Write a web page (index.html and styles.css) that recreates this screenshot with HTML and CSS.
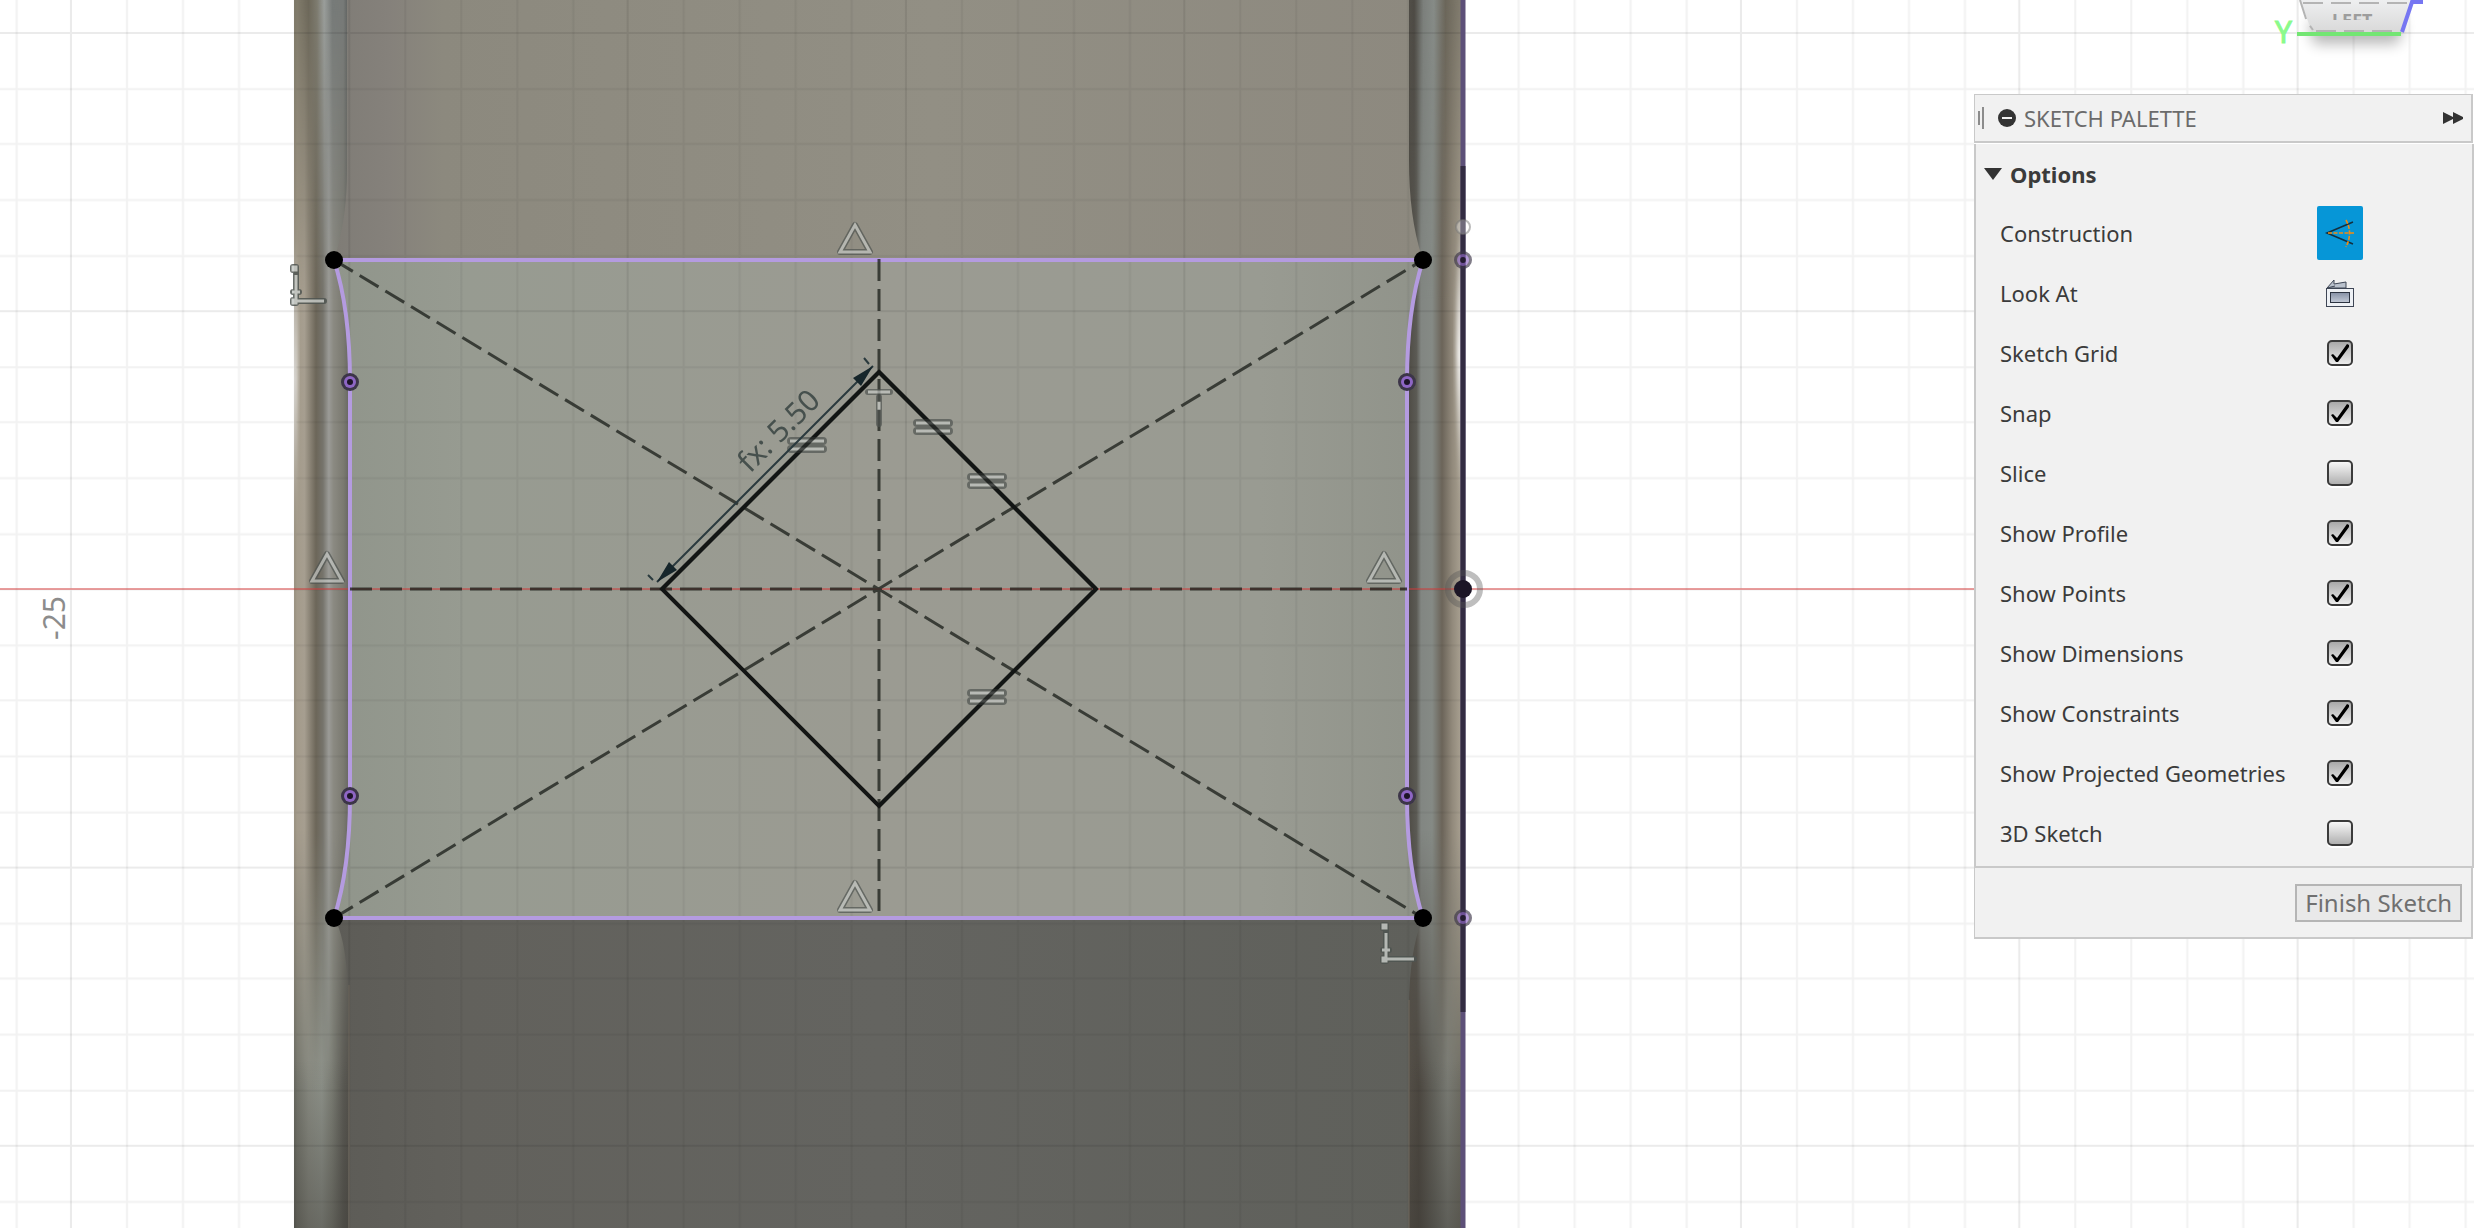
FILE: index.html
```
<!DOCTYPE html>
<html lang="en">
<head>
<meta charset="utf-8">
<meta name="viewport" content="width=device-width, initial-scale=1">
<title>Sketch</title>
<link rel="stylesheet" href="styles.css">
</head>
<body class="workspace">
<svg class="canvas" viewBox="0 0 2474 1228" preserveAspectRatio="xMinYMin slice" role="img" aria-label="Sketch canvas">
  <defs>
    <pattern id="grid" x="71" y="33" width="278.33" height="278.2" patternUnits="userSpaceOnUse">
      <path class="grid-minor" d="M56 0V279M112 0V279M168 0V279M224 0V279M0 56H279M0 111H279M0 167H279M0 223H279"/>
      <path class="grid-major" d="M0 0V279M278.33 0V279M0 0H279M0 278.2H279"/>
    </pattern>
    <linearGradient id="faceTop"><stop offset="0" stop-color="#7f7c76"/><stop offset=".05" stop-color="#85817b"/><stop offset=".1" stop-color="#8c897e"/><stop offset=".55" stop-color="#928f84"/><stop offset="1" stop-color="#8d897f"/></linearGradient>
    <linearGradient id="faceMid"><stop offset="0" stop-color="#90958b"/><stop offset=".12" stop-color="#979b91"/><stop offset=".5" stop-color="#9b9b92"/><stop offset=".85" stop-color="#999b92"/><stop offset="1" stop-color="#90938a"/></linearGradient>
    <linearGradient id="faceLow"><stop offset="0" stop-color="#5d5c57"/><stop offset=".12" stop-color="#62615c"/><stop offset=".5" stop-color="#646460"/><stop offset="1" stop-color="#5f605b"/></linearGradient>
    <linearGradient id="leftMid"><stop offset="0" stop-color="#a39a89"/><stop offset=".18" stop-color="#a69e90"/><stop offset=".38" stop-color="#6c6659"/><stop offset=".5" stop-color="#76746c"/><stop offset=".6" stop-color="#9b9b97"/><stop offset=".68" stop-color="#8b8a82"/><stop offset=".85" stop-color="#7b7a71"/><stop offset="1" stop-color="#5d5e5a"/></linearGradient>
    <linearGradient id="leftTop"><stop offset="0" stop-color="#85806f"/><stop offset=".25" stop-color="#6c6759"/><stop offset=".4" stop-color="#7e7c70"/><stop offset=".52" stop-color="#9a9e9b"/><stop offset=".66" stop-color="#767a78"/><stop offset=".85" stop-color="#777a78"/><stop offset="1" stop-color="#484b4a"/></linearGradient>
    <linearGradient id="leftLow"><stop offset="0" stop-color="#6e6f66"/><stop offset=".25" stop-color="#898b82"/><stop offset=".48" stop-color="#8f938b"/><stop offset=".65" stop-color="#7c7e75"/><stop offset=".85" stop-color="#5b5a54"/><stop offset="1" stop-color="#4f4c47"/></linearGradient>
    <linearGradient id="rightMid"><stop offset="0" stop-color="#4b4841"/><stop offset=".18" stop-color="#5b5a54"/><stop offset=".26" stop-color="#828682"/><stop offset=".45" stop-color="#858a85"/><stop offset=".62" stop-color="#6b6459"/><stop offset=".8" stop-color="#928a7c"/><stop offset="1" stop-color="#b0a898"/></linearGradient>
    <linearGradient id="rightTop"><stop offset="0" stop-color="#55524b"/><stop offset=".14" stop-color="#4d4a44"/><stop offset=".3" stop-color="#7b7f7b"/><stop offset=".48" stop-color="#868b87"/><stop offset=".68" stop-color="#6b665a"/><stop offset="1" stop-color="#858072"/></linearGradient>
    <linearGradient id="rightLow"><stop offset="0" stop-color="#57524a"/><stop offset=".22" stop-color="#4c4740"/><stop offset=".5" stop-color="#65655e"/><stop offset=".72" stop-color="#7b7d76"/><stop offset="1" stop-color="#6c6a5f"/></linearGradient>
    <linearGradient id="fadeDown" x2="0" y2="1"><stop offset="0" stop-color="#fff"/><stop offset="1" stop-color="#000"/></linearGradient>
    <linearGradient id="fadeUp" x2="0" y2="1"><stop offset="0" stop-color="#000"/><stop offset=".65" stop-color="#fff"/></linearGradient>
    <linearGradient id="shadeLow" x2="0" y2="1"><stop offset="0" stop-color="#3c3a35" stop-opacity="0"/><stop offset="1" stop-color="#3c3a35" stop-opacity=".45"/></linearGradient>
    <linearGradient id="glint" x2="0" y2="1"><stop offset="0" stop-color="#fff" stop-opacity="0"/><stop offset=".5" stop-color="#fff" stop-opacity=".9"/><stop offset="1" stop-color="#fff" stop-opacity="0"/></linearGradient>
    <linearGradient id="cube" x2="0" y2="1"><stop offset="0" stop-color="#eeeff0"/><stop offset="1" stop-color="#d9d9d9"/></linearGradient>
    <mask id="topMask"><rect width="2474" height="300" fill="url(#fadeDown)"/></mask>
    <mask id="lowMask"><rect y="830" width="2474" height="398" fill="url(#fadeUp)"/></mask>
    <clipPath id="cubeTextClip"><rect x="2325" y="12" width="64" height="8"/></clipPath>
    <filter id="soft" x="-50%" y="-20%" width="200%" height="140%"><feGaussianBlur stdDeviation="2"/></filter>
    <filter id="shadow" x="-50%" y="-100%" width="200%" height="300%"><feGaussianBlur stdDeviation="7"/></filter>
    <g id="midpoint"><path class="mark-edge" d="M0-27L15 0H-15Z"/><path class="mark-fill" d="M0-27L15 0H-15Z"/></g>
    <g id="equal"><path class="mark-edge wide" d="M-16-4H16M-16 4H16"/><path class="mark-fill" d="M-17-4H17M-17 4H17"/></g>
    <g id="corner"><path class="mark-edge" d="M2 2V33H30M-1-1h3v3h-3zM-1 32h3v3h-3zM-1 24h6"/><path class="mark-fill" d="M2 7V33H30M-1-1h3v3h-3zM-1 32h3v3h-3zM-2 24h8"/></g>
    <g id="vertex"><circle r="9" class="vertex-edge"/><circle r="6" class="vertex-ring"/><circle r="3" class="vertex-core"/></g>
  </defs>

  <!-- Solid body -->
  <g>
    <rect x="294" width="58" height="1228" fill="url(#leftMid)"/>
    <rect x="294" width="58" height="300" fill="url(#leftTop)" mask="url(#topMask)"/>
    <rect x="294" y="830" width="58" height="398" fill="url(#leftLow)" mask="url(#lowMask)"/>
    <rect x="1406" width="58" height="1228" fill="url(#rightMid)"/>
    <rect x="1406" width="58" height="300" fill="url(#rightTop)" mask="url(#topMask)"/>
    <rect x="1406" y="830" width="58" height="398" fill="url(#rightLow)" mask="url(#lowMask)"/>
    <rect x="294" y="1060" width="58" height="168" fill="url(#shadeLow)"/>
    <rect x="1406" y="1060" width="58" height="168" fill="url(#shadeLow)"/>
    <path d="M292 200Q302 350 292 560Z" fill="url(#glint)" filter="url(#soft)"/>
    <path d="M1463 190Q1450 340 1463 520Z" fill="url(#glint)" filter="url(#soft)"/>
    <path d="M347 0V170Q347 220 334 260H1423Q1409 220 1409 160V0Z" fill="url(#faceTop)"/>
    <path d="M334 918Q345 935 348 985V1228H1409V1010Q1409 950 1423 918Z" fill="url(#faceLow)"/>
    <path d="M334 260Q350 310 350 382V796Q350 868 334 918H1423Q1407 868 1407 796V382Q1407 310 1423 260Z" fill="url(#faceMid)"/>
    <path class="seam" d="M349 985V1228M1409 1000V1228"/>
  </g>
  <rect width="2474" height="1228" fill="url(#grid)"/>
  <path class="axis" d="M0 589H2474"/>
  <text class="ruler" transform="translate(65 640) rotate(-90)">-25</text>

  <!-- Projected edges -->
  <path class="edge-far" d="M1463 0V1228"/>
  <path class="edge-near" d="M1463 166V1012"/>
  <path class="profile" d="M334 260H1423Q1407 310 1407 382V796Q1407 868 1423 918H334Q350 868 350 796V382Q350 310 334 260Z"/>

  <!-- Construction lines and profile square -->
  <path class="construction" d="M334 260L1423 918M334 918L1423 260M879 259V918M350 589H1407"/>
  <path class="square" d="M879 372L1096 589L879 806L662 589Z"/>

  <!-- Constraint marks -->
  <g class="marks">
    <use href="#midpoint" x="855" y="252"/><use href="#midpoint" x="327" y="581"/>
    <use href="#midpoint" x="1384" y="581"/><use href="#midpoint" x="855" y="910"/>
    <use href="#equal" x="933" y="427"/><use href="#equal" x="987" y="481"/>
    <use href="#equal" x="807" y="445"/><use href="#equal" x="987" y="697"/>
    <path class="mark-edge" d="M868 392H890M879 397V424"/><path class="mark-fill" d="M868 392H890M879 402V410"/>
  </g>
  <path class="square" d="M879 372L1096 589M662 589L879 372M1096 589L879 806" opacity=".6"/>
  <g class="corners"><use href="#corner" x="294" y="268"/><use href="#corner" x="1384" y="926"/></g>

  <!-- Dimension -->
  <g class="dimension">
    <path class="dimension-line" d="M657 582L873 366M864 358l5 6M648 575l5 5"/>
    <path d="M873 366L853 378L861 386ZM657 582L669 562L677 570Z"/>
    <text transform="translate(750 474) rotate(-45)">fx: 5.50</text>
  </g>

  <!-- Sketch points -->
  <circle class="point" cx="334" cy="260" r="9"/><circle class="point" cx="1423" cy="260" r="9"/>
  <circle class="point" cx="334" cy="918" r="9"/><circle class="point" cx="1423" cy="918" r="9"/>
  <use href="#vertex" x="350" y="382"/><use href="#vertex" x="350" y="796"/>
  <use href="#vertex" x="1407" y="382"/><use href="#vertex" x="1407" y="796"/>
  <g opacity=".65"><use href="#vertex" x="1463" y="260"/><use href="#vertex" x="1463" y="918"/></g>
  <circle class="ghost" cx="1463" cy="227" r="7"/>
  <circle class="origin-ring" cx="1464" cy="589" r="16"/>
  <circle class="origin" cx="1463" cy="589" r="9"/>

  <!-- View cube -->
  <path d="M2308 22H2404L2398 44H2314Z" fill="#000" opacity=".28" filter="url(#shadow)"/>
  <path d="M2300 0H2412L2400 32H2312Z" fill="url(#cube)"/>
  <path class="cube-dash" d="M2303 3H2408M2300 0L2307 22L2313 30M2316 31H2398"/>
  <text class="cube-text" x="2332" y="27" clip-path="url(#cubeTextClip)">LEFT</text>
  <path class="cube-y" d="M2297 34H2401"/>
  <path class="cube-z" d="M2402 32L2412 2H2423"/>
  <text class="cube-axis" x="2275" y="43">Y</text>
</svg>

<aside class="palette">
  <header class="palette-header">
    <span class="grip"></span>
    <button class="icon-button" type="button" aria-label="Collapse palette">
      <svg width="18" height="18" viewBox="0 0 18 18"><circle cx="9" cy="9" r="9" fill="#333"/><path d="M4 9H14" stroke="#f1f1f1" stroke-width="2"/></svg>
    </button>
    <h1 class="palette-title">SKETCH PALETTE</h1>
    <button class="icon-button" type="button" aria-label="Dock palette">
      <svg width="20" height="12" viewBox="0 0 20 12"><path d="M0 0L10 5V0L20 5V7L10 12V7L0 12Z" fill="#333"/></svg>
    </button>
  </header>
  <section class="options">
    <h2 class="options-title">
      <svg width="18" height="12" viewBox="0 0 18 12"><path d="M0 0H18L9 12Z" fill="#333"/></svg>Options
    </h2>
    <div class="row"><label for="construction">Construction</label>
      <button class="tool active" id="construction" type="button" aria-pressed="true">
        <svg width="32" height="32" viewBox="0 0 32 32" fill="none"><path d="M29 5L3 16L29 27" stroke="#14303f" stroke-width="1.6"/><path d="M4 16H31" stroke="#f28c13" stroke-width="1.6" stroke-dasharray="4 1.5"/><path d="M22 3Q29 16 22 30" stroke="#f28c13" stroke-width="1.6" stroke-dasharray="4 1.5"/></svg>
      </button></div>
    <div class="row"><label for="look-at">Look At</label>
      <button class="tool" id="look-at" type="button">
        <svg width="32" height="32" viewBox="0 0 32 32"><defs><linearGradient id="screen" x2="0" y2="1"><stop offset="0" stop-color="#8590a5"/><stop offset="1" stop-color="#c3cad7"/></linearGradient></defs><path d="M3 11L10 3V7L22 5V11Z" fill="#b9c1cc" stroke="#3e4655"/><path d="M3 11L11 9" stroke="#3e4655"/><rect x="2.500" y="11.500" width="27" height="18" fill="#eef1f5" stroke="#3e4655"/><rect x="6.500" y="15.500" width="19" height="10" fill="url(#screen)" stroke="#2c3341"/></svg>
      </button></div>
    <div class="row"><label for="grid-on">Sketch Grid</label><input class="check" id="grid-on" type="checkbox" checked></div>
    <div class="row"><label for="snap">Snap</label><input class="check" id="snap" type="checkbox" checked></div>
    <div class="row"><label for="slice">Slice</label><input class="check" id="slice" type="checkbox"></div>
    <div class="row"><label for="profile">Show Profile</label><input class="check" id="profile" type="checkbox" checked></div>
    <div class="row"><label for="points">Show Points</label><input class="check" id="points" type="checkbox" checked></div>
    <div class="row"><label for="dimensions">Show Dimensions</label><input class="check" id="dimensions" type="checkbox" checked></div>
    <div class="row"><label for="constraints">Show Constraints</label><input class="check" id="constraints" type="checkbox" checked></div>
    <div class="row"><label for="projected">Show Projected Geometries</label><input class="check" id="projected" type="checkbox" checked></div>
    <div class="row"><label for="sketch-3d">3D Sketch</label><input class="check" id="sketch-3d" type="checkbox"></div>
  </section>
  <footer class="palette-footer"><button class="finish" type="button">Finish Sketch</button></footer>
</aside>
</body>
</html>
```
FILE: styles.css
```
* { box-sizing: border-box; }

.workspace {
  margin: 0;
  min-height: 100vh;
  display: flex;
  justify-content: flex-end;
  align-items: flex-start;
  padding: 94px 0 0;
  overflow: hidden;
  background: #fff;
  color: #3b3b3b;
  font: 22px/28px "Noto Sans", "Open Sans", sans-serif;
}

/* Drawing canvas, behind the palette */
.canvas { position: absolute; inset: 0; width: 100%; height: 100%; z-index: 0; }
.grid-minor { stroke: #000; stroke-opacity: .05; stroke-width: 2; fill: none; }
.grid-major { stroke: #000; stroke-opacity: .08; stroke-width: 2; fill: none; }
.axis { stroke: #dc3c3c; stroke-opacity: .48; stroke-width: 2; }
.ruler { font-size: 30px; fill: #8c8c8c; }
.seam { stroke: #746c60; stroke-width: 1; fill: none; }
.edge-far { stroke: #5d5078; stroke-width: 5; }
.edge-near { stroke: #332c42; stroke-width: 5; }
.profile { stroke: #b49be0; stroke-width: 4; fill: none; }
.construction { stroke: #20241f; stroke-opacity: .8; stroke-width: 3; stroke-dasharray: 22 8; fill: none; }
.square { stroke: #131514; stroke-width: 4; fill: none; }
.marks { opacity: .7; }
.corners { opacity: .85; }
.mark-edge { stroke: #4f5451; stroke-width: 6; stroke-linejoin: round; stroke-linecap: round; fill: none; }
.mark-edge.wide { stroke-width: 8; }
.mark-fill { stroke: #c5c8c4; stroke-width: 3; fill: none; }
.dimension { fill: #16262b; font-size: 30px; }
.dimension text { fill: #46504d; }
.dimension-line { stroke: #2a3a3e; stroke-width: 2; fill: none; }
.point { fill: #000; }
.vertex-edge { fill: #3c3548; }
.vertex-ring { fill: #8e66c4; }
.vertex-core { fill: #1d1428; }
.ghost { fill: #fff; fill-opacity: .3; stroke: #777; stroke-opacity: .5; stroke-width: 2; }
.origin-ring { fill: none; stroke: #555; stroke-opacity: .38; stroke-width: 6; }
.origin { fill: #1c1626; }
.cube-dash { fill: none; stroke: #b4b4b4; stroke-width: 2; stroke-dasharray: 20 8; }
.cube-text { font-size: 18px; font-weight: 700; fill: #9d9d9d; }
.cube-y { stroke: #73e673; stroke-width: 4; }
.cube-z { stroke: #7676f2; stroke-width: 4; fill: none; }
.cube-axis { font-size: 30px; fill: #8bfa8b; stroke: #8bfa8b; stroke-width: 1; }

/* Palette */
.palette { position: relative; z-index: 1; width: 500px; background: #fff; }
.palette-header {
  display: flex;
  align-items: center;
  height: 49px;
  margin-right: 1px;
  padding: 0 8px 0 3px;
  border: 1px solid #c9c9c9;
  border-width: 1px 2px 2px 1px;
  background: #f1f1f1;
}
.grip { width: 6px; height: 22px; margin-right: 14px; border-right: 2px solid #8c8c8c; background: linear-gradient(#8c8c8c, #8c8c8c) 0 50% / 2px 14px no-repeat; }
.palette-title { flex: 1; margin: 0 0 0 8px; font-size: 22px; font-weight: 400; color: #6b6b6b; }
.icon-button { display: flex; padding: 0; border: 0; background: none; }
.options { margin-top: 1px; padding: 0 8px 3px; border: solid #c9c9c9; border-width: 0 2px 2px; background: #f1f1f1; }
.options-title { display: flex; align-items: center; gap: 8px; height: 59px; margin: 0; font-size: 22px; font-weight: 700; }
.row { display: flex; align-items: center; height: 60px; padding-left: 16px; }
.row label { width: 317px; }
.row .check { margin-left: 10px; }
.tool { display: flex; align-items: center; justify-content: center; width: 46px; height: 54px; padding: 0; border: 0; border-radius: 2px; background: none; }
.tool.active { background: #0696d7; }
.check {
  appearance: none;
  display: grid;
  place-items: center;
  width: 26px;
  height: 26px;
  margin: 0;
  border: 2px solid #3b3b3b;
  border-radius: 5px;
  background: linear-gradient(#f8f8f8, #b0b0b0);
  box-shadow: 0 2px 0 #fff;
}
.check:checked { background: linear-gradient(#a9a9a9, #ececec); }
.check:checked::before {
  content: "";
  width: 18px;
  height: 18px;
  background: #000;
  clip-path: polygon(0 11px, 2px 10px, 6px 14px, 16px 0, 18px 1px, 18px 3px, 7px 18px, 5px 18px);
}
.palette-footer {
  display: flex;
  justify-content: flex-end;
  margin-right: 1px;
  padding: 16px 9px 15px 0;
  border: solid #c9c9c9;
  border-width: 0 2px 2px 1px;
  background: #f1f1f1;
}
.finish { height: 38px; padding: 0 8px; border: 2px solid #b5b5b5; background: #e9e9e9; color: #707070; font: 24px/30px "Noto Sans", "Open Sans", sans-serif; }
```
